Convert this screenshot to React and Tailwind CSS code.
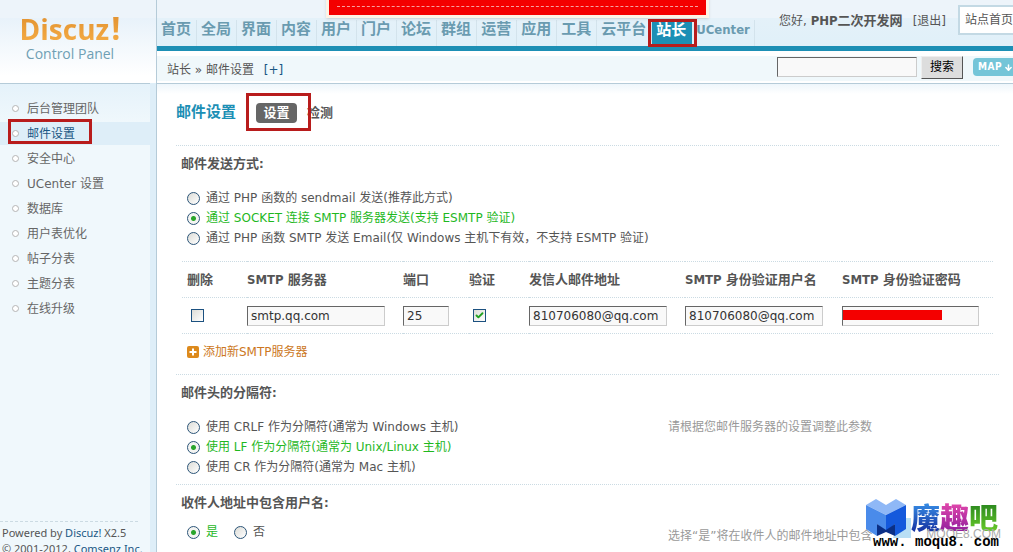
import React, { useState } from 'react';
import { Check, ArrowDown } from 'lucide-react';

const navItems = ['首页', '全局', '界面', '内容', '用户', '门户', '论坛', '群组', '运营', '应用', '工具', '云平台', '站长', 'UCenter'];

const sideItems = ['后台管理团队', '邮件设置', '安全中心', 'UCenter 设置', '数据库', '用户表优化', '帖子分表', '主题分表', '在线升级'];

const sendModes = [
    '通过 PHP 函数的 sendmail 发送(推荐此方式)',
    '通过 SOCKET 连接 SMTP 服务器发送(支持 ESMTP 验证)',
    '通过 PHP 函数 SMTP 发送 Email(仅 Windows 主机下有效，不支持 ESMTP 验证)',
];

const delimiters = [
    '使用 CRLF 作为分隔符(通常为 Windows 主机)',
    '使用 LF 作为分隔符(通常为 Unix/Linux 主机)',
    '使用 CR 作为分隔符(通常为 Mac 主机)',
];

const boldFont = "font-['DejaVu_Sans_Condensed','DejaVu_Sans','Noto_Sans_CJK_SC',sans-serif] font-bold";
const fieldStyle = 'h-5 border border-t-[#666] border-l-[#666] border-r-[#ccc] border-b-[#ccc] bg-[#f9f9f9] px-[3px] text-xs text-[#333] outline-none';

const RadioGroup = ({ name, options, value, onChange, inline }) => (
    <div className={inline ? 'flex gap-4' : 'flex flex-col'}>
        {options.map((option, i) => (
            <label key={option} className={`flex h-5 items-center gap-[6px] whitespace-nowrap ${value === i ? 'text-[#1fb81f]' : ''}`}>
                <input
                    type="radio"
                    name={name}
                    checked={value === i}
                    onChange={() => onChange(i)}
                    className="size-[13px] shrink-0 appearance-none rounded-full border border-[#2c5578] bg-[linear-gradient(135deg,#dcdcd7,#fff)] checked:bg-[radial-gradient(circle,#2ba52b_0,#2ba52b_2px,#f4f4f2_3px)]"
                />
                {option}
            </label>
        ))}
    </div>
);

const CheckBox = ({ label, defaultChecked }) => (
    <span className="relative ml-1 block size-[13px]">
        <input
            type="checkbox"
            aria-label={label}
            defaultChecked={defaultChecked}
            className="peer block size-[13px] appearance-none border border-[#1c5180] bg-[linear-gradient(135deg,#dcdcd7,#fff)]"
        />
        <Check size={9} strokeWidth={5} className="pointer-events-none absolute top-[2px] left-[2px] hidden text-[#21a121] peer-checked:block" />
    </span>
);

const Section = ({ title, children }) => (
    <section className="border-t border-dotted border-[#cbdbe3]">
        <h3 className={`flex h-9 items-center pl-[5px] text-[13px] ${boldFont}`}>{title}</h3>
        {children}
    </section>
);

const Logo = () => (
    <a href="#" className="flex h-[83px] flex-col items-center bg-[linear-gradient(#edf4fa_0,#edf4fa_18px,#e8f2fa_18px,#fff_76px)] pt-2 pr-4 font-['Open_Sans','Noto_Sans',sans-serif]">
        <span className="flex h-9 items-baseline gap-[2px] bg-[linear-gradient(#dd8c2c,#f5ac45)] bg-clip-text text-[28px] leading-10 font-bold text-transparent">
            Discuz<span className="text-[32px]">!</span>
        </span>
        <span className="text-[14px] leading-5 text-[#6f9fb4]">Control Panel</span>
    </a>
);

const Watermark = () => (
    <div className="pointer-events-none absolute right-3 bottom-[2px] w-[136px]">
        <div className="flex items-start">
            <svg width="46" height="44" viewBox="0 0 46 44" className="shrink-0">
                <path d="M35 20h11v20H28z" fill="#b9dff5" />
                <path d="M1 7 11 1l10 6 10-6 10 6-20 10z" fill="#8fb8f6" />
                <path d="M1 7 21 17v17L12 26v12L1 31z" fill="#4a8bea" />
                <path d="M41 7 21 17v17l9-8v12l11-7z" fill="#1459dc" />
                <path d="m12 26 9 6v2l-9 4z" fill="#0a2f86" />
                <path d="m30 26-9 6v2l9 4z" fill="#0a2f86" />
            </svg>
            <div className="flex font-['Noto_Sans_CJK_SC',sans-serif] text-[29px] leading-9 font-black">
                <span className="bg-[linear-gradient(#3d9df0,#122a9c)] bg-clip-text text-transparent">魔</span>
                <span className="bg-[linear-gradient(#f04fae,#8a1a9c)] bg-clip-text text-transparent">趣</span>
                <span className="bg-[linear-gradient(#1d7a1d,#6fd02a)] bg-clip-text text-transparent">吧</span>
            </div>
        </div>
        <span className="absolute right-0 bottom-2 font-['Liberation_Sans',sans-serif] text-[12px] leading-4 text-[#aaa]">MOQE8.COM</span>
        <div className="relative -mt-2 pl-2 font-['Liberation_Mono',monospace] text-[14px] leading-4 font-bold whitespace-nowrap text-black">www. moqu8. com</div>
    </div>
);

const App = () => {
    const [sendMode, setSendMode] = useState(1);
    const [delimiter, setDelimiter] = useState(1);
    const [includeName, setIncludeName] = useState(0);

    return (
        <div className="relative flex h-screen overflow-hidden bg-white font-['DejaVu_Sans','Noto_Sans_CJK_SC',sans-serif] text-xs text-[#555]">
            <aside className="flex w-[157px] shrink-0 flex-col border-r border-[#b5cbd8] bg-[#deeef8]">
                <Logo />
                <div className="mr-[6px] flex flex-1 flex-col border-t border-[#b5cbd8] bg-[linear-gradient(#e5f2fa,#f0f8fc_40px)]">
                    <ul className="pt-[13px]">
                        {sideItems.map((item) => (
                            <li key={item} className="relative h-[25px]">
                                <a
                                    href="#"
                                    className={`flex h-[23px] items-center gap-2 pl-3 ${item === '邮件设置' ? 'bg-[#deeef8] text-[#1a5784]' : 'text-[#666]'}`}
                                >
                                    <span className="size-[7px] rounded-full border border-[#b5b5b5] bg-white" />
                                    {item}
                                </a>
                                {item === '邮件设置' && <span className="absolute -top-[3px] left-2 h-[25px] w-[84px] border-3 border-[#b81c1c]" />}
                            </li>
                        ))}
                    </ul>
                    <p className="mt-auto mr-3 h-[31px] border-t border-dashed border-[#ccdbe3] pt-[3px] pl-[2px] font-['Noto_Sans',sans-serif] text-[11px] leading-4 whitespace-nowrap">
                        Powered by <a href="#" className="text-[#1a5784]">Discuz!</a> X2.5
                        <br />© 2001-2012, <a href="#" className="text-[#1a5784]">Comsenz Inc.</a>
                    </p>
                </div>
            </aside>

            <div className="flex min-w-0 flex-1 flex-col">
                <header className="flex h-[51px] shrink-0 justify-between border-b-5 border-[#1c8fb5] bg-[linear-gradient(#edf4fa_0,#edf4fa_18px,#e4f1f9_18px,#e0f0f9)]">
                    <nav className={`mt-5 flex text-[15px] text-[#6a9bb0] ${boldFont}`}>
                        {navItems.map((item) => (
                            <span key={item} className="relative flex">
                                <a
                                    href="#"
                                    className={`flex items-center border-r px-1 pb-[6px] whitespace-nowrap ${item === '站长' ? 'mt-[2px] border-[#1c8fb5] bg-[#1c8fb5] text-white' : 'border-[#d3e3ec]'} ${item === 'UCenter' ? 'text-[13px]' : 'pr-[5px]'}`}
                                >
                                    {item}
                                </a>
                                {item === '站长' && <span className="absolute -top-[1px] -left-1 h-7 w-[49px] border-3 border-[#b81c1c]" />}
                            </span>
                        ))}
                    </nav>
                    <div className="flex shrink-0">
                        <p className="mt-[11px] mr-3 h-5 leading-5">
                            您好, <b className={`mr-[10px] text-[13px] ${boldFont}`}>PHP二次开发网</b>
                            <a href="#">[退出]</a>
                        </p>
                        <a href="#" className="mt-[5px] flex h-[30px] w-[55px] items-center overflow-hidden border-2 border-r-0 border-[#c3d9e4] bg-white pl-[5px] whitespace-nowrap">站点首页</a>
                    </div>
                </header>

                <div className="flex h-[33px] shrink-0 items-center justify-between border-b border-[#b5cbd8] bg-[linear-gradient(#fff_5px,#f0f8fb_5px,#f0f8fb_30px,#fff_30px)] pl-[10px]">
                    <p className="pt-[5px]">
                        站长 » 邮件设置 <a href="#" className="ml-[6px] text-[#1a5784]">[+]</a>
                    </p>
                    <form className="flex items-center overflow-hidden" onSubmit={(e) => e.preventDefault()}>
                        <input type="text" aria-label="搜索" className={`w-[140px] ${fieldStyle}`} />
                        <button type="submit" className="ml-1 h-[23px] w-[42px] border border-t-[#eee] border-l-[#eee] border-r-[#555] border-b-[#555] bg-[#ddd] text-black">搜索</button>
                        <a href="#" className={`ml-[10px] flex h-[18px] w-10 items-center gap-[2px] overflow-hidden rounded-l bg-[#74c5d8] pl-[5px] text-[10px] tracking-wider text-white ${boldFont}`}>
                            MAP <ArrowDown size={9} strokeWidth={4} className="shrink-0" />
                        </a>
                    </form>
                </div>

                <main className="min-h-0 flex-1 overflow-hidden bg-[linear-gradient(#eef6fb,#fff_10px)] pr-[14px] pl-[19px]">
                    <div className={`flex h-[61px] items-center pb-1 text-[13px] ${boldFont}`}>
                        <h2 className="w-20 text-[15px] text-[#1c8fb5]">邮件设置</h2>
                        <span className="relative">
                            <button type="button" className="block h-5 w-[41px] rounded bg-[#666] text-white">设置</button>
                            <span className="absolute -top-[10px] -left-[10px] h-[38px] w-[65px] border-3 border-[#b81c1c]" />
                        </span>
                        <a href="#" className="ml-[10px]">检测</a>
                    </div>

                    <Section title="邮件发送方式:">
                        <div className="pt-[6px] pb-[13px] pl-[11px]">
                            <RadioGroup name="sendMode" options={sendModes} value={sendMode} onChange={setSendMode} />
                        </div>
                        <table className="ml-[6px] w-[calc(100%-12px)] table-fixed border-collapse text-left">
                            <thead>
                                <tr className={`h-9 border-y border-dotted border-[#cbdbe3] text-[13px] whitespace-nowrap ${boldFont}`}>
                                    <th className="w-[65px] pl-[5px]">删除</th>
                                    <th className="w-[156px]">SMTP 服务器</th>
                                    <th className="w-[66px]">端口</th>
                                    <th className="w-[60px]">验证</th>
                                    <th className="w-[156px]">发信人邮件地址</th>
                                    <th className="w-[157px]">SMTP 身份验证用户名</th>
                                    <th>SMTP 身份验证密码</th>
                                </tr>
                            </thead>
                            <tbody>
                                <tr className="h-9 border-b border-dotted border-[#cbdbe3]">
                                    <td className="pl-[5px]"><CheckBox label="删除" /></td>
                                    <td><input type="text" aria-label="SMTP 服务器" defaultValue="smtp.qq.com" className={`block w-[138px] ${fieldStyle}`} /></td>
                                    <td><input type="text" aria-label="端口" defaultValue="25" className={`block w-[46px] ${fieldStyle}`} /></td>
                                    <td><CheckBox label="验证" defaultChecked /></td>
                                    <td><input type="text" aria-label="发信人邮件地址" defaultValue="810706080@qq.com" className={`block w-[138px] ${fieldStyle}`} /></td>
                                    <td><input type="text" aria-label="SMTP 身份验证用户名" defaultValue="810706080@qq.com" className={`block w-[138px] ${fieldStyle}`} /></td>
                                    <td>
                                        <span className="relative block">
                                            <input type="text" aria-label="SMTP 身份验证密码" className={`block w-[137px] ${fieldStyle}`} />
                                            <span className="absolute top-1 left-[1px] h-[10px] w-[99px] bg-[#f40000]" />
                                        </span>
                                    </td>
                                </tr>
                            </tbody>
                        </table>
                        <div className="flex h-10 pt-2 pl-[11px]">
                            <a href="#" className="flex h-5 items-center gap-1 text-[#cc7722]">
                                <svg width="12" height="12" viewBox="0 0 12 12">
                                    <rect width="12" height="12" rx="2" fill="#dd8a1c" />
                                    <path d="M6 2.5v7M2.5 6h7" stroke="#fff" strokeWidth="2" />
                                </svg>
                                添加新SMTP服务器
                            </a>
                        </div>
                    </Section>

                    <Section title="邮件头的分隔符:">
                        <div className="grid grid-cols-[492px_1fr] pt-[6px] pb-[7px]">
                            <div className="pl-[11px]">
                                <RadioGroup name="delimiter" options={delimiters} value={delimiter} onChange={setDelimiter} />
                            </div>
                            <p className="leading-5 text-[#999]">请根据您邮件服务器的设置调整此参数</p>
                        </div>
                    </Section>

                    <Section title="收件人地址中包含用户名:">
                        <div className="grid grid-cols-[492px_1fr] pt-[1px]">
                            <div className="pl-[11px]">
                                <RadioGroup name="includeName" options={['是', '否']} value={includeName} onChange={setIncludeName} inline />
                            </div>
                            <p className="pt-1 leading-5 whitespace-nowrap text-[#999]">选择“是”将在收件人的邮件地址中包含</p>
                        </div>
                    </Section>
                </main>
            </div>

            <div className="absolute -top-1 left-[326px] h-[22px] w-[383px] border-3 border-[#fdf3e6] bg-[#f40000] shadow">
                <div className="mx-2 mt-[7px] border-t border-dashed border-[#f7a0a0]" />
            </div>
            <Watermark />
        </div>
    );
};

export default App;
